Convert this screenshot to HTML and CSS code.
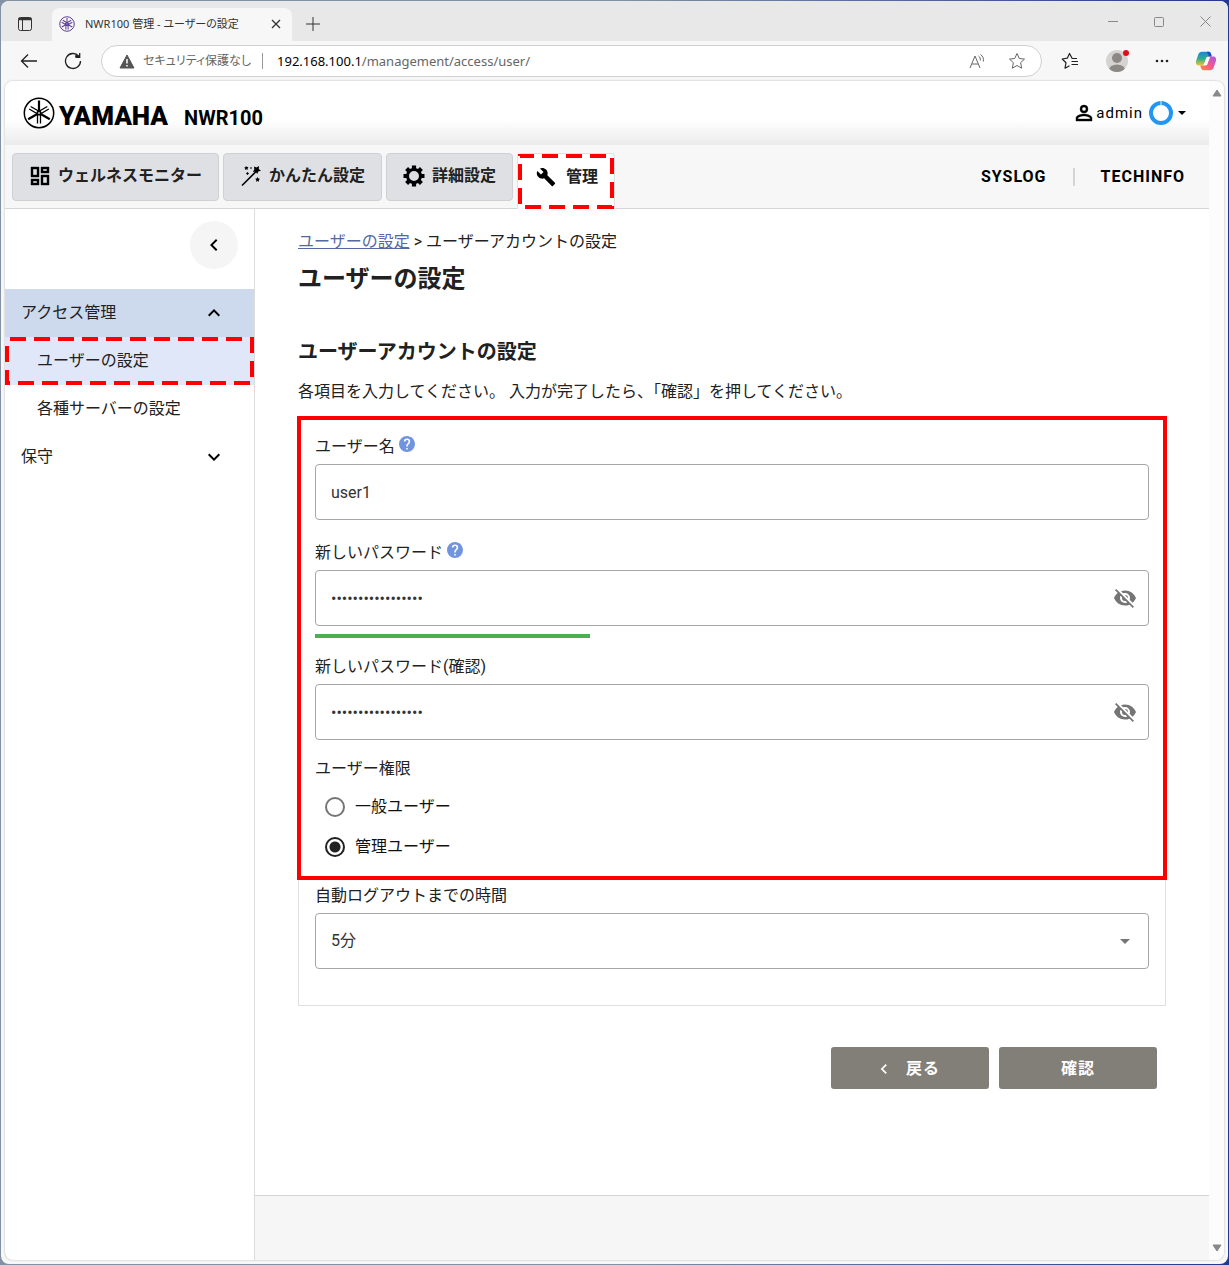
FILE: index.html
```
<!DOCTYPE html>
<html lang="ja">
<head>
    <meta charset="UTF-8">
    <meta name="viewport" content="width=device-width, initial-scale=1.0">
    <title>NWR100 管理 - ユーザーの設定</title>
    <link rel="stylesheet" href="styles.css">
</head>
<body>

    <div class="window">

        <!-- Browser tabs -->
        <div class="title-bar">
            <button class="chrome-button tab-actions" aria-label="タブ操作">
                <svg width="16" height="16" viewBox="0 0 16 16" fill="none" stroke="#333"><rect x="1.500" y="1.500" width="13" height="13" rx="2"/><path d="M1.500 3h13" stroke-width="2.500"/><path d="M5.500 4v10"/></svg>
            </button>
            <div class="browser-tab">
                <svg class="favicon" width="16" height="16" viewBox="0 0 32 32" fill="none" stroke="#5d3c98">
                    <circle cx="16" cy="16" r="14.500" stroke-width="2"/>
                    <g id="forks-small" stroke-width="2">
                        <path d="M16 4v8M13.800 27V14l2.200-2 2.200 2v13"/>
                        <path d="M16 4v8M13.800 27V14l2.200-2 2.200 2v13" transform="rotate(120 16 16)"/>
                        <path d="M16 4v8M13.800 27V14l2.200-2 2.200 2v13" transform="rotate(240 16 16)"/>
                    </g>
                </svg>
                <span class="browser-tab-title">NWR100 管理 - ユーザーの設定</span>
                <button class="chrome-button" aria-label="タブを閉じる">
                    <svg width="10" height="10" viewBox="0 0 10 10" fill="none" stroke="#333" stroke-width="1.300"><path d="M1 1l8 8M9 1L1 9"/></svg>
                </button>
            </div>
            <button class="chrome-button new-tab" aria-label="新しいタブ">
                <svg width="14" height="14" viewBox="0 0 14 14" fill="none" stroke="#333"><path d="M7 0v14M0 7h14"/></svg>
            </button>
            <div class="window-controls">
                <button class="chrome-button" aria-label="最小化"><svg width="10" height="10" viewBox="0 0 10 10" stroke="#888"><path d="M0 4.500h10"/></svg></button>
                <button class="chrome-button" aria-label="最大化"><svg width="10" height="10" viewBox="0 0 10 10" fill="none" stroke="#888"><rect x=".5" y=".5" width="9" height="9" rx="1"/></svg></button>
                <button class="chrome-button" aria-label="閉じる"><svg width="11" height="11" viewBox="0 0 11 11" fill="none" stroke="#888"><path d="M.5.5l10 10M10.500.5l-10 10"/></svg></button>
            </div>
        </div>

        <!-- Address bar -->
        <div class="toolbar">
            <button class="chrome-button" aria-label="戻る">
                <svg width="18" height="16" viewBox="0 0 18 16" fill="none" stroke="#222" stroke-width="1.300"><path d="M17 8H1.500M8 1.500L1.500 8 8 14.500"/></svg>
            </button>
            <button class="chrome-button" aria-label="更新">
                <svg width="18" height="18" viewBox="0 0 18 18" fill="none" stroke="#222" stroke-width="1.300"><path d="M16.500 9A7.500 7.500 0 1 1 14.600 4H11M15.700 1v4.300H11.500"/></svg>
            </button>
            <div class="address-bar">
                <svg width="16" height="15" viewBox="0 0 16 15"><path d="M8 1l7 13H1z" fill="#555" stroke="#555" stroke-linejoin="round"/><path d="M8 5v4.500M8 11v1.600" stroke="#fff" stroke-width="1.500"/></svg>
                <span class="security">セキュリティ保護なし</span>
                <span class="address"><span class="host">192.168.100.1</span>/management/access/user/</span>
                <button class="chrome-button" aria-label="読み上げ">
                    <svg width="17" height="16" viewBox="0 0 17 16" fill="none" stroke="#666"><path d="M1 15L6 3l5 12M2.800 11h6.400M9.500 3c1.500 1 2 2.500 1.800 4.500M11.500 1.500c2.500 1.500 3.300 4 2.800 7"/></svg>
                </button>
                <button class="chrome-button" aria-label="お気に入りに追加">
                    <svg width="18" height="18" viewBox="0 0 18 18" fill="none" stroke="#666" stroke-linejoin="round"><path d="M9 1.500l2.300 5 5.200.6-3.900 3.600 1.100 5.500L9 13.500l-4.700 2.700 1.100-5.500L1.500 7.100l5.200-.6z"/></svg>
                </button>
            </div>
            <div class="toolbar-end">
                <button class="chrome-button" aria-label="お気に入り">
                    <svg width="18" height="18" viewBox="0 0 18 18" fill="none" stroke="#222" stroke-width="1.200" stroke-linejoin="round"><path d="M16 6.500h-4.800L8.500 1.500 6.300 6.200 1.200 7l3.800 3.700-1 5.500 4.500-2.500M10.500 9.500H17M10.500 12.500H17"/></svg>
                </button>
                <button class="chrome-button profile" aria-label="プロファイル">
                    <svg width="24" height="24" viewBox="0 0 24 24"><defs><clipPath id="avatar"><circle cx="12" cy="12" r="11"/></clipPath></defs><circle cx="12" cy="12" r="11" fill="#d5d3d1"/><g clip-path="url(#avatar)" fill="#8b8886"><circle cx="12" cy="9" r="5"/><ellipse cx="12" cy="21" rx="8" ry="5.500"/></g><circle cx="21" cy="4" r="3" fill="#e60b17"/></svg>
                </button>
                <button class="chrome-button" aria-label="設定など">
                    <svg width="14" height="4" viewBox="0 0 14 4" fill="#222"><circle cx="2" cy="2" r="1.300"/><circle cx="7" cy="2" r="1.300"/><circle cx="12" cy="2" r="1.300"/></svg>
                </button>
                <button class="chrome-button" aria-label="Copilot">
                    <svg width="22" height="22" viewBox="0 0 24 22">
                        <defs>
                            <linearGradient id="cool" x1="0" y1="0" x2="0" y2="1"><stop offset="0" stop-color="#1687e0"/><stop offset=".5" stop-color="#2fae8e"/><stop offset="1" stop-color="#f3c72c"/></linearGradient>
                            <linearGradient id="warm" x1="1" y1="0" x2="0" y2="1"><stop offset="0" stop-color="#a457e8"/><stop offset=".5" stop-color="#ef5a90"/><stop offset="1" stop-color="#ff8a3c"/></linearGradient>
                        </defs>
                        <path d="M7.500 1H15c2 0 2.500 2 3.200 5h-3c-2 0-2.800.8-3.300 2.500L9.500 16H4C1 16 .5 13 1.500 10L3.700 3.700C4.300 2 5.500 1 7.500 1z" fill="url(#cool)"/>
                        <path d="M13 1h2c2 0 2.500 2 3.200 5h-3z" fill="#1c50c8"/>
                        <path d="M16.500 21H9c-2 0-2.500-2-3.200-5h3c2 0 2.800-.8 3.300-2.500L14.500 6H20c3 0 3.500 3 2.500 6l-2.200 6.300c-.6 1.700-1.800 2.700-3.800 2.700z" fill="url(#warm)"/>
                        <path d="M13.500 6.500h3L13 15.500h-4z" fill="#fff"/>
                    </svg>
                </button>
            </div>
        </div>

        <div class="viewport">
            <div class="page">

                <header class="page-header">
                    <div class="brand">
                        <svg class="brand-mark" width="32" height="32" viewBox="0 0 32 32" fill="none" stroke="#000">
                            <circle cx="16" cy="16" r="14.700" stroke-width="1.500"/>
                            <g stroke-width="1.300">
                                <path d="M14.500 26.500V15l1.500-2 1.500 2v11.500"/><path d="M16 3.500v10" stroke-width="2.200"/>
                                <g transform="rotate(120 16 16)"><path d="M14.500 26.500V15l1.500-2 1.500 2v11.500"/><path d="M16 3.500v10" stroke-width="2.200"/></g>
                                <g transform="rotate(240 16 16)"><path d="M14.500 26.500V15l1.500-2 1.500 2v11.500"/><path d="M16 3.500v10" stroke-width="2.200"/></g>
                            </g>
                        </svg>
                        <span class="brand-name">YAMAHA</span>
                        <span class="product-name">NWR100</span>
                    </div>
                    <button class="account">
                        <svg width="24" height="24" viewBox="0 0 24 24"><path d="M12,4A4,4 0 0,1 16,8A4,4 0 0,1 12,12A4,4 0 0,1 8,8A4,4 0 0,1 12,4M12,6A2,2 0 0,0 10,8A2,2 0 0,0 12,10A2,2 0 0,0 14,8A2,2 0 0,0 12,6M12,13C14.670,13 20,14.330 20,17V20H4V17C4,14.330 9.330,13 12,13M12,14.900C9.030,14.900 5.900,16.360 5.900,17V18.100H18.100V17C18.100,16.360 14.970,14.900 12,14.900Z" stroke="#000" stroke-width=".4"/></svg>
                        <span>admin</span>
                        <svg class="account-ring" width="24" height="24" viewBox="0 0 24 24" fill="none"><circle cx="12" cy="12" r="10" stroke="#2196f3" stroke-width="4"/><path d="M12 0v4" stroke="#e3f2fd"/></svg>
                        <svg width="8" height="4" viewBox="0 0 8 4"><path d="M0 0h8L4 4z"/></svg>
                    </button>
                </header>

                <nav class="main-nav">
                    <a class="nav-tab" href="#">
                        <svg width="24" height="24" viewBox="0 0 24 24"><path d="M19,5V7H15V5H19M9,5V11H5V5H9M19,13V19H15V13H19M9,17V19H5V17H9M21,3H13V9H21V3M11,3H3V13H11V3M21,11H13V21H21V11M11,15H3V21H11V15Z" stroke="#000" stroke-width=".4"/></svg>
                        ウェルネスモニター
                    </a>
                    <a class="nav-tab" href="#">
                        <svg width="24" height="24" viewBox="0 0 24 24"><path d="M3 21.500L17.500 7" stroke="#000" stroke-width="1.600"/><path d="M15 2.500l2.500 1L20 2l-.2 3 2.200 1.700-2.800.8L18.300 10l-1.700-2.300-2.800.1 1.500-2.300zM7 2l1 1 1.500.1-.9 1.200.4 1.500-1.500-.5-1.300.8V4.600L5 3.700l1.500-.4zM8.500 8l1.500 1.500L8.500 11 7 9.500zM18.500 13l.9 1.500 1.600.3-1.200 1.200.3 1.700-1.600-.8-1.500.8.300-1.700-1.200-1.200 1.600-.3zM12 3l1 1-1 1-1-1z"/></svg>
                        かんたん設定
                    </a>
                    <a class="nav-tab" href="#">
                        <svg width="24" height="24" viewBox="0 0 24 24" fill="none" stroke="#000"><circle cx="12" cy="12" r="6.500" stroke-width="3"/><g stroke-width="4.200"><path d="M12 1.500v3.500M12 19v3.500M1.500 12H5M19 12h3.500M4.600 4.600l2.400 2.400M17 17l2.400 2.400M4.600 19.400L7 17M17 7l2.400-2.400"/></g></svg>
                        詳細設定
                    </a>
                    <a class="nav-tab active" href="#">
                        <svg width="20" height="20" viewBox="0 0 24 24"><path d="M22.700,19L13.600,9.900C14.500,7.600 14,4.900 12.100,3C10.100,1 7.100,0.600 4.700,1.700L9,6L6,9L1.600,4.700C0.400,7.100 0.900,10.100 2.900,12.100C4.800,14 7.500,14.500 9.800,13.600L18.900,22.700C19.300,23.100 19.900,23.100 20.300,22.700L22.600,20.400C23.100,20 23.100,19.300 22.700,19Z"/></svg>
                        管理
                        <svg class="marker"><rect/></svg>
                    </a>
                    <div class="nav-links">
                        <a href="#">SYSLOG</a>
                        <a href="#">TECHINFO</a>
                    </div>
                </nav>

                <div class="page-body">

                    <aside class="sidebar">
                        <button class="collapse-button" aria-label="メニューを閉じる">
                            <svg width="24" height="24" viewBox="0 0 24 24"><path d="M15.410,16.580L10.830,12L15.410,7.410L14,6L8,12L14,18L15.410,16.580Z"/></svg>
                        </button>
                        <button class="menu-item open">
                            アクセス管理
                            <svg width="24" height="24" viewBox="0 0 24 24"><path d="M7.410,15.410L12,10.830L16.590,15.410L18,14L12,8L6,14L7.410,15.410Z"/></svg>
                        </button>
                        <a class="menu-item sub-item selected" href="#">
                            ユーザーの設定
                            <svg class="marker"><rect/></svg>
                        </a>
                        <a class="menu-item sub-item" href="#">各種サーバーの設定</a>
                        <button class="menu-item">
                            保守
                            <svg width="24" height="24" viewBox="0 0 24 24"><path d="M7.410,8.580L12,13.170L16.590,8.580L18,10L12,16L6,10L7.410,8.580Z"/></svg>
                        </button>
                    </aside>

                    <div class="content">
                        <main>
                            <div class="breadcrumb"><a href="#">ユーザーの設定</a> &gt; ユーザーアカウントの設定</div>
                            <h1>ユーザーの設定</h1>
                            <h2>ユーザーアカウントの設定</h2>
                            <p class="lead">各項目を入力してください。 入力が完了したら、「確認」を押してください。</p>

                            <form>
                                <div class="card">
                                    <div class="account-fields">
                                        <div class="field">
                                            <label for="userName">ユーザー名</label>
                                            <svg class="help" width="16" height="16" viewBox="2 2 20 20"><circle cx="12" cy="12" r="9" fill="#fff"/><path d="M15.070,11.250L14.170,12.170C13.450,12.890 13,13.500 13,15H11V14.500C11,13.390 11.450,12.390 12.170,11.670L13.410,10.410C13.780,10.050 14,9.550 14,9C14,7.890 13.100,7 12,7A2,2 0 0,0 10,9H8A4,4 0 0,1 12,5A4,4 0 0,1 16,9C16,9.880 15.640,10.670 15.070,11.250M13,19H11V17H13M12,2A10,10 0 0,0 2,12A10,10 0 0,0 12,22A10,10 0 0,0 22,12C22,6.470 17.500,2 12,2Z"/></svg>
                                            <input class="text-box" type="text" id="userName" value="user1">
                                        </div>
                                        <div class="field">
                                            <label for="password">新しいパスワード</label>
                                            <svg class="help" width="16" height="16" viewBox="2 2 20 20"><circle cx="12" cy="12" r="9" fill="#fff"/><path d="M15.070,11.250L14.170,12.170C13.450,12.890 13,13.500 13,15H11V14.500C11,13.390 11.450,12.390 12.170,11.670L13.410,10.410C13.780,10.050 14,9.550 14,9C14,7.890 13.100,7 12,7A2,2 0 0,0 10,9H8A4,4 0 0,1 12,5A4,4 0 0,1 16,9C16,9.880 15.640,10.670 15.070,11.250M13,19H11V17H13M12,2A10,10 0 0,0 2,12A10,10 0 0,0 12,22A10,10 0 0,0 22,12C22,6.470 17.500,2 12,2Z"/></svg>
                                            <div class="password-box">
                                                <input class="text-box" type="password" id="password" value="abcdefgh123456789">
                                                <button type="button" class="eye-button" aria-label="パスワードを表示">
                                                    <svg width="24" height="24" viewBox="0 0 24 24"><path d="M11.830,9L15,12.160C15,12.110 15,12.050 15,12A3,3 0 0,0 12,9C11.940,9 11.890,9 11.830,9M7.530,9.800L9.080,11.350C9.030,11.560 9,11.770 9,12A3,3 0 0,0 12,15C12.220,15 12.440,14.970 12.650,14.920L14.200,16.470C13.530,16.800 12.790,17 12,17A5,5 0 0,1 7,12C7,11.210 7.200,10.470 7.530,9.800M2,4.270L4.280,6.550L4.730,7C3.080,8.300 1.780,10 1,12C2.730,16.390 7,19.500 12,19.500C13.550,19.500 15.030,19.200 16.380,18.660L16.810,19.080L19.730,22L21,20.730L3.270,3M12,7A5,5 0 0,1 17,12C17,12.640 16.870,13.260 16.640,13.820L19.570,16.750C21.070,15.500 22.270,13.860 23,12C21.270,7.610 17,4.500 12,4.500C10.600,4.500 9.260,4.750 8,5.200L10.170,7.350C10.740,7.130 11.350,7 12,7Z"/></svg>
                                                </button>
                                            </div>
                                            <div class="strength"><div class="strength-bar" style="width: 33%"></div></div>
                                        </div>
                                        <div class="field tight">
                                            <label for="passwordConfirm">新しいパスワード(確認)</label>
                                            <div class="password-box">
                                                <input class="text-box" type="password" id="passwordConfirm" value="abcdefgh123456789">
                                                <button type="button" class="eye-button" aria-label="パスワードを表示">
                                                    <svg width="24" height="24" viewBox="0 0 24 24"><path d="M11.830,9L15,12.160C15,12.110 15,12.050 15,12A3,3 0 0,0 12,9C11.940,9 11.890,9 11.830,9M7.530,9.800L9.080,11.350C9.030,11.560 9,11.770 9,12A3,3 0 0,0 12,15C12.220,15 12.440,14.970 12.650,14.920L14.200,16.470C13.530,16.800 12.790,17 12,17A5,5 0 0,1 7,12C7,11.210 7.200,10.470 7.530,9.800M2,4.270L4.280,6.550L4.730,7C3.080,8.300 1.780,10 1,12C2.730,16.390 7,19.500 12,19.500C13.550,19.500 15.030,19.200 16.380,18.660L16.810,19.080L19.730,22L21,20.730L3.270,3M12,7A5,5 0 0,1 17,12C17,12.640 16.870,13.260 16.640,13.820L19.570,16.750C21.070,15.500 22.270,13.860 23,12C21.270,7.610 17,4.500 12,4.500C10.600,4.500 9.260,4.750 8,5.200L10.170,7.350C10.740,7.130 11.350,7 12,7Z"/></svg>
                                                </button>
                                            </div>
                                        </div>
                                        <fieldset class="field tight">
                                            <legend>ユーザー権限</legend>
                                            <label class="radio"><input type="radio" name="role" value="general">一般ユーザー</label>
                                            <label class="radio"><input type="radio" name="role" value="admin" checked>管理ユーザー</label>
                                        </fieldset>
                                    </div>
                                    <div class="logout-field">
                                        <label for="logoutTime">自動ログアウトまでの時間</label>
                                        <div class="select-box">
                                            <select class="text-box" id="logoutTime">
                                                <option>5分</option>
                                            </select>
                                            <svg width="10" height="5" viewBox="0 0 10 5"><path d="M0 0h10L5 5z"/></svg>
                                        </div>
                                    </div>
                                </div>
                                <div class="actions">
                                    <button type="button" class="action-button back">
                                        <svg width="20" height="20" viewBox="0 0 24 24"><path d="M15.410,16.580L10.830,12L15.410,7.410L14,6L8,12L14,18L15.410,16.580Z"/></svg>
                                        戻る
                                    </button>
                                    <button type="submit" class="action-button">確認</button>
                                </div>
                            </form>
                        </main>
                        <footer class="page-footer"></footer>
                    </div>
                </div>
            </div>

            <div class="scrollbar">
                <svg width="10" height="8" viewBox="0 0 10 8"><path d="M5 1l4 6H1z" fill="#888" stroke="#888" stroke-linejoin="round"/></svg>
                <svg width="10" height="8" viewBox="0 0 10 8"><path d="M5 7l4-6H1z" fill="#888" stroke="#888" stroke-linejoin="round"/></svg>
            </div>
        </div>
    </div>

</body>
</html>
```
FILE: styles.css
```
* {
    box-sizing: border-box;
}

body {
    margin: 0;
    padding: 1px;
    min-height: 100vh;
    display: flex;
    font-family: Roboto, "Noto Sans CJK JP", sans-serif;
    font-size: 16px;
    line-height: 24px;
    color: #212121;
    background: linear-gradient(to right, #8291a3 50%, #23388f);
}

button {
    padding: 0;
    border: none;
    background: none;
    font: inherit;
    color: inherit;
    cursor: pointer;
}

a {
    color: inherit;
    text-decoration: none;
}

svg {
    flex-shrink: 0;
}

/* Browser window */
.window {
    flex: 1;
    min-width: 0;
    display: flex;
    flex-direction: column;
    border-radius: 8px;
    background-color: #f7f7f7;
    overflow: hidden;
}

.title-bar {
    display: flex;
    height: 40px;
    padding-top: 7px;
    background-color: #e8e8e8;
    font-family: "Noto Sans", "Noto Sans CJK JP", sans-serif;
    font-size: 11px;
}

.chrome-button {
    display: flex;
    align-items: center;
    justify-content: center;
}

.tab-actions {
    width: 51px;
    padding: 0 3px 2px 0;
}

.browser-tab {
    display: flex;
    align-items: center;
    width: 240px;
    padding: 0 11px 2px 7px;
    border-radius: 8px 8px 0 0;
    background-color: #f7f7f7;
}

.browser-tab-title {
    flex: 1;
    padding-left: 10px;
    white-space: nowrap;
    color: #333;
    font-feature-settings: "palt";
}

.new-tab {
    width: 42px;
    padding-bottom: 2px;
}

.window-controls {
    display: flex;
    align-items: center;
    gap: 36px;
    margin-left: auto;
    padding: 0 17px 6px 0;
}

.toolbar {
    display: flex;
    align-items: center;
    height: 40px;
    padding-left: 19px;
    gap: 26px;
}

.address-bar {
    flex: 1;
    display: flex;
    align-items: center;
    height: 32px;
    margin: 0 -7px;
    padding: 0 15px 0 17px;
    border: 1px solid #d0d0d0;
    border-radius: 16px;
    background-color: #fff;
    font-family: "Noto Sans", "Noto Sans CJK JP", sans-serif;
    font-size: 13px;
    color: #666;
}

.security {
    margin: 0 14px 0 8px;
    padding-right: 11px;
    border-right: 1px solid #999;
    font-size: 12px;
    line-height: 16px;
    font-feature-settings: "palt";
}

.address {
    flex: 1;
}

.host {
    color: #000;
}

.address-bar .chrome-button {
    margin-left: 22px;
}

.toolbar-end {
    display: flex;
    align-items: center;
    gap: 26px;
    padding-right: 11px;
}

.viewport {
    flex: 1;
    display: flex;
    margin: 0 4px 4px;
    border-radius: 8px;
    background-color: #fff;
    box-shadow: 0 0 2px #aaa;
    overflow: hidden;
}

.scrollbar {
    display: flex;
    flex-direction: column;
    justify-content: space-between;
    align-items: center;
    width: 15px;
    padding: 8px 0;
    background-color: #fcfcfc;
}

/* Page */
.page {
    flex: 1;
    min-width: 0;
    display: flex;
    flex-direction: column;
}

.page-header {
    display: flex;
    align-items: center;
    justify-content: space-between;
    height: 64px;
    padding: 0 23px 0 18px;
    background: linear-gradient(#fff 60%, #ebebeb);
}

.brand {
    display: flex;
    align-items: baseline;
    color: #000;
}

.brand-mark {
    align-self: center;
}

.brand-name {
    margin-left: 4px;
    padding-top: 6px;
    font-size: 26px;
    font-weight: 900;
    line-height: 32px;
}

.product-name {
    margin-left: 16px;
    font-size: 20px;
    font-weight: bold;
}

.account {
    display: flex;
    align-items: center;
    color: #000;
    font-size: 15px;
    letter-spacing: 1px;
}

.account-ring {
    margin: 0 5px 0 6px;
}

.main-nav {
    display: flex;
    align-items: flex-start;
    gap: 4px;
    height: 64px;
    padding: 8px 24px 0 7px;
    border-bottom: 1px solid #d5d6d8;
    background-color: #f7f7f7;
    font-weight: bold;
}

.nav-tab {
    position: relative;
    display: flex;
    align-items: center;
    gap: 6px;
    height: 48px;
    padding: 0 16px 2px 15px;
    border: 1px solid #cfd0d3;
    border-radius: 4px;
    background-color: #dfe0e4;
    white-space: nowrap;
}

.nav-tab.active {
    gap: 10px;
    height: 56px;
    padding-bottom: 10px;
    padding-left: 18px;
    border-color: #e0e0e0;
    border-bottom: none;
    border-radius: 4px 4px 0 0;
    background-color: #fff;
}

/* Dashed red frame drawn over an item */
.marker {
    position: absolute;
    top: 0;
    left: 0;
    width: 100%;
    height: 100%;
}

.marker rect {
    x: 2px;
    y: 2px;
    width: calc(100% - 4px);
    height: calc(100% - 4px);
    fill: none;
    stroke: #f00;
    stroke-width: 4px;
    stroke-dasharray: 16px 8px;
    stroke-dashoffset: -3px;
}

.nav-tab .marker rect {
    stroke-dashoffset: 2px;
}

.nav-links {
    display: flex;
    align-items: center;
    height: 48px;
    margin-left: auto;
    color: #000;
    letter-spacing: 1px;
}

.nav-links a + a {
    margin-left: 26px;
    padding-left: 26px;
    border-left: 2px solid #d5d5d5;
    line-height: 18px;
}

.page-body {
    flex: 1;
    display: flex;
}

/* Sidebar */
.sidebar {
    display: flex;
    flex-direction: column;
    width: 250px;
    padding-top: 12px;
    border-right: 1px solid #dcdcdc;
}

.collapse-button {
    display: flex;
    align-items: center;
    justify-content: center;
    align-self: flex-end;
    width: 48px;
    height: 48px;
    margin: 0 16px 20px 0;
    border-radius: 50%;
    background-color: #f5f5f5;
}

.menu-item {
    position: relative;
    display: flex;
    align-items: center;
    justify-content: space-between;
    height: 48px;
    padding: 0 28px 0 16px;
    text-align: left;
}

.menu-item.open {
    background-color: #cdd9ed;
}

.sub-item {
    padding-left: 32px;
}

.sub-item.selected {
    background-color: #dfe7f9;
}

/* Content */
.content {
    flex: 1;
    min-width: 0;
    display: flex;
    flex-direction: column;
}

main {
    flex: 1;
    padding: 21px 43px 40px;
}

.breadcrumb a {
    color: #5469a3;
    text-decoration: underline;
}

h1 {
    margin: 7px 0 0;
    font-size: 24px;
    line-height: 36px;
}

h2 {
    margin: 40px 0 0;
    font-size: 20px;
    line-height: 30px;
}

.lead {
    margin: 13px 0;
}

.card {
    border: 1px solid #e0e0e0;
}

.account-fields {
    position: relative;
    padding: 17px 16px 13px;
}

.account-fields::after {
    content: "";
    position: absolute;
    top: -2px;
    right: -2px;
    bottom: 0;
    left: -2px;
    border: 4px solid #f00;
    pointer-events: none;
}

.field {
    margin: 0 0 21px;
    padding: 0;
    border: none;
}

.field.tight {
    margin: -4px 0 0;
}

.field.tight + .tight {
    margin-top: 17px;
}

.field legend {
    padding: 0;
    margin-bottom: 6px;
}

.help {
    fill: #7094e0;
    vertical-align: 0;
}

.text-box {
    display: block;
    width: 100%;
    height: 56px;
    margin-top: 5px;
    padding: 0 15px;
    border: 1px solid #a6a6a6;
    border-radius: 4px;
    background-color: #fff;
    font: inherit;
    color: #333;
    appearance: none;
}

.password-box,
.select-box {
    position: relative;
}

.eye-button {
    position: absolute;
    top: 16px;
    right: 12px;
    height: 24px;
    fill: #757575;
}

.select-box svg {
    position: absolute;
    top: 26px;
    right: 19px;
    fill: #757575;
    pointer-events: none;
}

.strength {
    padding-top: 8px;
}

.strength-bar {
    height: 4px;
    background-color: #4caf50;
}

.radio {
    display: flex;
    align-items: center;
    height: 40px;
    padding-left: 10px;
    color: #111;
}

.radio input {
    width: 20px;
    height: 20px;
    margin: 0 10px 0 0;
    border: 2px solid #757575;
    border-radius: 50%;
    appearance: none;
}

.radio input:checked {
    border-color: #212121;
    background: radial-gradient(#212121 5px, #fff 6px);
}

.logout-field {
    padding: 4px 16px 36px;
}

.actions {
    display: flex;
    justify-content: flex-end;
    gap: 10px;
    margin: 41px 9px 0 0;
}

.action-button {
    display: flex;
    align-items: center;
    justify-content: center;
    gap: 12px;
    width: 158px;
    height: 42px;
    padding-top: 2px;
    border-radius: 3px;
    background-color: #827e78;
    color: #fff;
    fill: #fff;
    font-weight: bold;
    letter-spacing: 1px;
}

.action-button.back {
    padding-right: 6px;
}

.page-footer {
    height: 65px;
    border-top: 1px solid #d5d5d5;
    background-color: #f6f6f6;
}
```
